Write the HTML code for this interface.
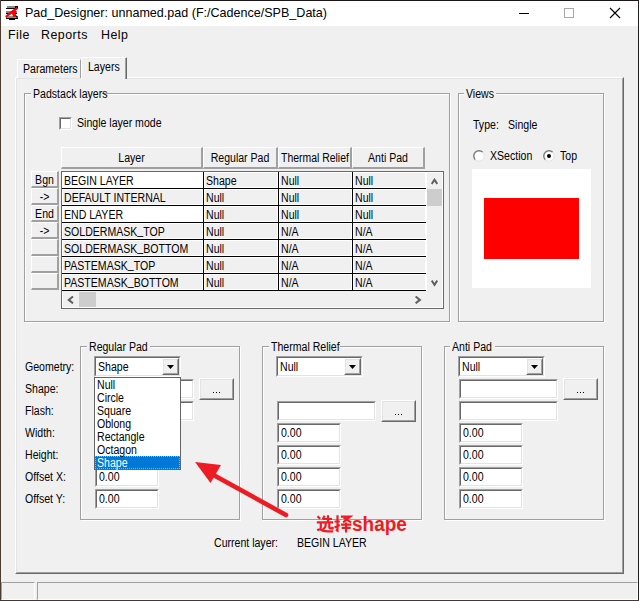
<!DOCTYPE html>
<html><head><meta charset="utf-8"><title>Pad_Designer</title>
<style>
*{margin:0;padding:0;box-sizing:border-box}
html,body{width:639px;height:601px;overflow:hidden;background:#f0f0f0}
body{position:relative;font-family:"Liberation Sans",sans-serif;font-size:12px;color:#000}
.a{position:absolute}
.t{position:absolute;white-space:nowrap;line-height:13px;transform-origin:0 0}
.gb{position:absolute;border:1px solid #a0a0a0;box-shadow:inset 1px 1px 0 #fff, 1px 1px 0 #fff}
.ed{position:absolute;background:#fff;border-top:1px solid #a0a0a0;border-left:1px solid #a0a0a0;border-right:1px solid #fff;border-bottom:1px solid #fff}
.ed::before{content:"";position:absolute;left:0;top:0;right:0;bottom:0;border-top:1px solid #696969;border-left:1px solid #696969;border-right:1px solid #e3e3e3;border-bottom:1px solid #e3e3e3}
.bt{position:absolute;background:#f0f0f0;border-top:1px solid #fff;border-left:1px solid #fff;border-right:1px solid #696969;border-bottom:1px solid #696969}
.bt::before{content:"";position:absolute;left:0;top:0;right:0;bottom:0;border-top:1px solid #e3e3e3;border-left:1px solid #e3e3e3;border-right:1px solid #a0a0a0;border-bottom:1px solid #a0a0a0}
.hb,.rb{position:absolute;background:#f0f0f0;border-top:1px solid #fff;border-left:1px solid #fff;border-right:2px solid #a0a0a0;border-bottom:2px solid #a0a0a0}
</style></head><body>
<div class="a" style="left:0px;top:0px;width:639px;height:1px;background:#1c1616"></div>
<div class="a" style="left:0px;top:0px;width:1px;height:601px;background:#4a3c32"></div>
<div class="a" style="left:638px;top:0px;width:1px;height:601px;background:#1e2220"></div>
<div class="a" style="left:0px;top:600px;width:639px;height:1px;background:#4a3630"></div>
<div class="a" style="left:1px;top:1px;width:637px;height:25px;background:#fff"></div>
<svg class="a" style="left:5px;top:6px" width="14" height="14" viewBox="0 0 14 14" shape-rendering="crispEdges">
<rect x="2" y="0" width="9" height="2" fill="#8a8a8a"/><rect x="1" y="2" width="12" height="1" fill="#000"/><rect x="10" y="0" width="3" height="2" fill="#000"/>
<rect x="1" y="5" width="11" height="2" fill="#8a8a8a"/><rect x="1" y="7" width="3" height="1" fill="#000"/><rect x="9" y="7" width="3" height="1" fill="#000"/>
<rect x="1" y="10" width="12" height="2" fill="#8a8a8a"/><rect x="1" y="12" width="12" height="1" fill="#000"/><rect x="4" y="13" width="6" height="1" fill="#000"/>
<path d="M9.5 4L3 8.5M9 8L12.5 11.5" stroke="#000" stroke-width="1.2" shape-rendering="auto"/>
<path d="M0.8 11L4 8.2L7 6L12.5 1.8" stroke="#f00" stroke-width="2.3" fill="none" shape-rendering="auto"/>
<path d="M5.5 6.2L11 4.5L10.8 10.8L8.2 11L7.2 8Z" fill="#f00" shape-rendering="auto"/>
</svg>
<div class="t" style="left:25px;top:5px;font-size:12.55px;line-height:16px">Pad_Designer: unnamed.pad (F:/Cadence/SPB_Data)</div>
<div class="a" style="left:519px;top:13px;width:10px;height:1px;background:#000"></div>
<div class="a" style="left:564px;top:8px;width:10px;height:10px;border:1px solid #a8a8a8"></div>
<svg class="a" style="left:609px;top:7px" width="12" height="12" viewBox="0 0 12 12"><path d="M1 1L11 11M11 1L1 11" stroke="#000" stroke-width="1.1"/></svg>
<div class="t" style="left:8px;top:27px;font-size:12.4px;letter-spacing:.5px;line-height:16px">File</div>
<div class="t" style="left:41px;top:27px;font-size:12.4px;letter-spacing:.5px;line-height:16px">Reports</div>
<div class="t" style="left:101px;top:27px;font-size:12.4px;letter-spacing:.5px;line-height:16px">Help</div>
<div class="a" style="left:15px;top:77px;width:609px;height:497px;border-top:1px solid #fff;border-left:1px solid #fff;border-right:1px solid #696969;border-bottom:1px solid #696969"><div class="a" style="left:0;top:0;right:0;bottom:0;border-top:1px solid #e3e3e3;border-left:1px solid #e3e3e3;border-right:1px solid #a0a0a0;border-bottom:1px solid #a0a0a0"></div></div>
<div class="a" style="left:17px;top:59px;width:64px;height:19px;border-top:1px solid #fff;border-left:1px solid #fff;border-right:1px solid #a0a0a0;background:#f0f0f0"></div>
<div class="t" style="left:23px;top:63px;transform:scaleX(0.88);">Parameters</div>
<div class="a" style="left:81px;top:57px;width:46px;height:22px;border-top:1px solid #fff;border-left:1px solid #fff;border-right:1px solid #696969;background:#f0f0f0"><div class="a" style="left:0;top:0;right:0;bottom:0;border-right:1px solid #a0a0a0"></div></div>
<div class="t" style="left:88px;top:61px;transform:scaleX(0.88);">Layers</div>
<div class="gb" style="left:24px;top:93px;width:426px;height:229px"></div>
<div class="a" style="left:31px;top:91px;width:71px;height:5px;background:#f0f0f0"></div>
<div class="t" style="left:33px;top:88px;transform:scaleX(0.88);">Padstack layers</div>
<div class="ed" style="left:59px;top:117px;width:13px;height:13px;background:#fff"></div>
<div class="t" style="left:77px;top:117px;transform:scaleX(0.88);">Single layer mode</div>
<div class="hb" style="left:61px;top:147px;width:142px;height:22px"></div>
<div class="t" style="left:61px;top:152px;width:141px;text-align:center;transform:scaleX(0.88);transform-origin:50% 0;">Layer</div>
<div class="hb" style="left:203px;top:147px;width:75px;height:22px"></div>
<div class="t" style="left:203px;top:152px;width:74px;text-align:center;transform:scaleX(0.88);transform-origin:50% 0;">Regular Pad</div>
<div class="hb" style="left:278px;top:147px;width:74px;height:22px"></div>
<div class="t" style="left:281px;top:152px;transform:scaleX(0.87)">Thermal Relief</div>
<div class="hb" style="left:352px;top:147px;width:73px;height:22px"></div>
<div class="t" style="left:352px;top:152px;width:72px;text-align:center;transform:scaleX(0.88);transform-origin:50% 0;">Anti Pad</div>
<div class="a" style="left:61px;top:171px;width:383px;height:138px;background:#f0f0f0;border:1px solid #696969;"></div>
<div class="a" style="left:62px;top:172px;width:381px;height:136px;border:1px solid #fff"></div>
<div class="rb" style="left:31px;top:171px;width:28px;height:17px"></div>
<div class="t" style="left:31px;top:174px;width:27px;text-align:center;transform:scaleX(0.88);transform-origin:50% 0;">Bgn</div>
<div class="a" style="left:62px;top:172px;width:141px;height:16px;background:#fff"></div>
<div class="t" style="left:64px;top:175px;transform:scaleX(0.88);">BEGIN LAYER</div>
<div class="a" style="left:204px;top:172px;width:74px;height:16px;background:#f0f0f0;border:1px solid #fff"></div>
<div class="t" style="left:206px;top:175px;transform:scaleX(0.88);">Shape</div>
<div class="a" style="left:279px;top:172px;width:73px;height:16px;background:#f0f0f0;border:1px solid #fff"></div>
<div class="t" style="left:281px;top:175px;transform:scaleX(0.88);">Null</div>
<div class="a" style="left:353px;top:172px;width:73px;height:16px;background:#f0f0f0;border:1px solid #fff"></div>
<div class="t" style="left:355px;top:175px;transform:scaleX(0.88);">Null</div>
<div class="a" style="left:62px;top:188px;width:364px;height:1px;background:#000"></div>
<div class="rb" style="left:31px;top:188px;width:28px;height:17px"></div>
<div class="t" style="left:31px;top:191px;width:27px;text-align:center;transform:scaleX(0.88);transform-origin:50% 0;">-&gt;</div>
<div class="a" style="left:62px;top:189px;width:141px;height:16px;background:#f0f0f0;border:1px solid #fff"></div>
<div class="t" style="left:64px;top:192px;transform:scaleX(0.88);">DEFAULT INTERNAL</div>
<div class="a" style="left:204px;top:189px;width:74px;height:16px;background:#f0f0f0;border:1px solid #fff"></div>
<div class="t" style="left:206px;top:192px;transform:scaleX(0.88);">Null</div>
<div class="a" style="left:279px;top:189px;width:73px;height:16px;background:#f0f0f0;border:1px solid #fff"></div>
<div class="t" style="left:281px;top:192px;transform:scaleX(0.88);">Null</div>
<div class="a" style="left:353px;top:189px;width:73px;height:16px;background:#f0f0f0;border:1px solid #fff"></div>
<div class="t" style="left:355px;top:192px;transform:scaleX(0.88);">Null</div>
<div class="a" style="left:62px;top:205px;width:364px;height:1px;background:#000"></div>
<div class="rb" style="left:31px;top:205px;width:28px;height:17px"></div>
<div class="t" style="left:31px;top:208px;width:27px;text-align:center;transform:scaleX(0.88);transform-origin:50% 0;">End</div>
<div class="a" style="left:62px;top:206px;width:141px;height:16px;background:#fff"></div>
<div class="t" style="left:64px;top:209px;transform:scaleX(0.88);">END LAYER</div>
<div class="a" style="left:204px;top:206px;width:74px;height:16px;background:#f0f0f0;border:1px solid #fff"></div>
<div class="t" style="left:206px;top:209px;transform:scaleX(0.88);">Null</div>
<div class="a" style="left:279px;top:206px;width:73px;height:16px;background:#f0f0f0;border:1px solid #fff"></div>
<div class="t" style="left:281px;top:209px;transform:scaleX(0.88);">Null</div>
<div class="a" style="left:353px;top:206px;width:73px;height:16px;background:#f0f0f0;border:1px solid #fff"></div>
<div class="t" style="left:355px;top:209px;transform:scaleX(0.88);">Null</div>
<div class="a" style="left:62px;top:222px;width:364px;height:1px;background:#000"></div>
<div class="rb" style="left:31px;top:222px;width:28px;height:17px"></div>
<div class="t" style="left:31px;top:225px;width:27px;text-align:center;transform:scaleX(0.88);transform-origin:50% 0;">-&gt;</div>
<div class="a" style="left:62px;top:223px;width:141px;height:16px;background:#f0f0f0;border:1px solid #fff"></div>
<div class="t" style="left:64px;top:226px;transform:scaleX(0.88);">SOLDERMASK<span style="position:relative;top:-2px">_</span>TOP</div>
<div class="a" style="left:204px;top:223px;width:74px;height:16px;background:#f0f0f0;border:1px solid #fff"></div>
<div class="t" style="left:206px;top:226px;transform:scaleX(0.88);">Null</div>
<div class="a" style="left:279px;top:223px;width:73px;height:16px;background:#f0f0f0;border:1px solid #fff"></div>
<div class="t" style="left:281px;top:226px;transform:scaleX(0.88);">N/A</div>
<div class="a" style="left:353px;top:223px;width:73px;height:16px;background:#f0f0f0;border:1px solid #fff"></div>
<div class="t" style="left:355px;top:226px;transform:scaleX(0.88);">N/A</div>
<div class="a" style="left:62px;top:239px;width:364px;height:1px;background:#000"></div>
<div class="rb" style="left:31px;top:239px;width:28px;height:17px"></div>
<div class="a" style="left:62px;top:240px;width:141px;height:16px;background:#f0f0f0;border:1px solid #fff"></div>
<div class="t" style="left:64px;top:243px;transform:scaleX(0.88);">SOLDERMASK<span style="position:relative;top:-2px">_</span>BOTTOM</div>
<div class="a" style="left:204px;top:240px;width:74px;height:16px;background:#f0f0f0;border:1px solid #fff"></div>
<div class="t" style="left:206px;top:243px;transform:scaleX(0.88);">Null</div>
<div class="a" style="left:279px;top:240px;width:73px;height:16px;background:#f0f0f0;border:1px solid #fff"></div>
<div class="t" style="left:281px;top:243px;transform:scaleX(0.88);">N/A</div>
<div class="a" style="left:353px;top:240px;width:73px;height:16px;background:#f0f0f0;border:1px solid #fff"></div>
<div class="t" style="left:355px;top:243px;transform:scaleX(0.88);">N/A</div>
<div class="a" style="left:62px;top:256px;width:364px;height:1px;background:#000"></div>
<div class="rb" style="left:31px;top:256px;width:28px;height:17px"></div>
<div class="a" style="left:62px;top:257px;width:141px;height:16px;background:#f0f0f0;border:1px solid #fff"></div>
<div class="t" style="left:64px;top:260px;transform:scaleX(0.88);">PASTEMASK<span style="position:relative;top:-2px">_</span>TOP</div>
<div class="a" style="left:204px;top:257px;width:74px;height:16px;background:#f0f0f0;border:1px solid #fff"></div>
<div class="t" style="left:206px;top:260px;transform:scaleX(0.88);">Null</div>
<div class="a" style="left:279px;top:257px;width:73px;height:16px;background:#f0f0f0;border:1px solid #fff"></div>
<div class="t" style="left:281px;top:260px;transform:scaleX(0.88);">N/A</div>
<div class="a" style="left:353px;top:257px;width:73px;height:16px;background:#f0f0f0;border:1px solid #fff"></div>
<div class="t" style="left:355px;top:260px;transform:scaleX(0.88);">N/A</div>
<div class="a" style="left:62px;top:273px;width:364px;height:1px;background:#000"></div>
<div class="rb" style="left:31px;top:273px;width:28px;height:17px"></div>
<div class="a" style="left:62px;top:274px;width:141px;height:16px;background:#f0f0f0;border:1px solid #fff"></div>
<div class="t" style="left:64px;top:277px;transform:scaleX(0.88);">PASTEMASK<span style="position:relative;top:-2px">_</span>BOTTOM</div>
<div class="a" style="left:204px;top:274px;width:74px;height:16px;background:#f0f0f0;border:1px solid #fff"></div>
<div class="t" style="left:206px;top:277px;transform:scaleX(0.88);">Null</div>
<div class="a" style="left:279px;top:274px;width:73px;height:16px;background:#f0f0f0;border:1px solid #fff"></div>
<div class="t" style="left:281px;top:277px;transform:scaleX(0.88);">N/A</div>
<div class="a" style="left:353px;top:274px;width:73px;height:16px;background:#f0f0f0;border:1px solid #fff"></div>
<div class="t" style="left:355px;top:277px;transform:scaleX(0.88);">N/A</div>
<div class="a" style="left:62px;top:290px;width:364px;height:1px;background:#000"></div>
<div class="a" style="left:203px;top:172px;width:1px;height:119px;background:#000"></div>
<div class="a" style="left:278px;top:172px;width:1px;height:119px;background:#000"></div>
<div class="a" style="left:352px;top:172px;width:1px;height:119px;background:#000"></div>
<div class="a" style="left:426px;top:172px;width:1px;height:119px;background:#fff"></div>
<div class="a" style="left:427px;top:189px;width:15px;height:17px;background:#cdcdcd"></div>
<svg class="a" style="left:431px;top:178px" width="7" height="7" viewBox="0 0 7 7"><path d="M0.7 6L3.5 1.7L6.3 6" fill="none" stroke="#606060" stroke-width="2"/></svg>
<svg class="a" style="left:431px;top:280px" width="7" height="7" viewBox="0 0 7 7"><path d="M0.7 0.6L3.5 4.9L6.3 0.6" fill="none" stroke="#606060" stroke-width="2"/></svg>
<div class="a" style="left:79px;top:292px;width:17px;height:15px;background:#cdcdcd"></div>
<svg class="a" style="left:67px;top:296px" width="7" height="8" viewBox="0 0 7 8"><path d="M6 0.5L1.7 3.9L6 7.3" fill="none" stroke="#606060" stroke-width="2"/></svg>
<svg class="a" style="left:415px;top:296px" width="7" height="8" viewBox="0 0 7 8"><path d="M0.6 0.5L4.9 3.9L0.6 7.3" fill="none" stroke="#606060" stroke-width="2"/></svg>
<div class="gb" style="left:458px;top:93px;width:146px;height:229px"></div>
<div class="a" style="left:464px;top:91px;width:32px;height:5px;background:#f0f0f0"></div>
<div class="t" style="left:466px;top:88px;transform:scaleX(0.88);">Views</div>
<div class="t" style="left:473px;top:119px;transform:scaleX(0.88);">Type:</div>
<div class="t" style="left:508px;top:119px;transform:scaleX(0.88);">Single</div>
<svg class="a" style="left:473px;top:150px" width="12" height="12" viewBox="0 0 12 12"><circle cx="6" cy="6" r="5" fill="#fff"/><path d="M2.3 9.7A5 5 0 0 1 9.7 2.3" fill="none" stroke="#7a7a7a" stroke-width="1.4"/><path d="M9.7 2.3A5 5 0 0 1 2.3 9.7" fill="none" stroke="#e3e3e3" stroke-width="1"/></svg>
<div class="t" style="left:490px;top:150px;transform:scaleX(0.88);">XSection</div>
<svg class="a" style="left:543px;top:150px" width="12" height="12" viewBox="0 0 12 12"><circle cx="6" cy="6" r="5" fill="#fff"/><path d="M2.3 9.7A5 5 0 0 1 9.7 2.3" fill="none" stroke="#7a7a7a" stroke-width="1.4"/><path d="M9.7 2.3A5 5 0 0 1 2.3 9.7" fill="none" stroke="#e3e3e3" stroke-width="1"/><circle cx="6" cy="6" r="2" fill="#000"/></svg>
<div class="t" style="left:560px;top:150px;transform:scaleX(0.88);">Top</div>
<div class="a" style="left:472px;top:169px;width:119px;height:119px;background:#fff"></div>
<div class="a" style="left:484px;top:198px;width:95px;height:61px;background:#f00"></div>
<div class="t" style="left:25px;top:361px;transform:scaleX(0.88);">Geometry:</div>
<div class="t" style="left:25px;top:383px;transform:scaleX(0.88);">Shape:</div>
<div class="t" style="left:25px;top:405px;transform:scaleX(0.88);">Flash:</div>
<div class="t" style="left:25px;top:427px;transform:scaleX(0.88);">Width:</div>
<div class="t" style="left:25px;top:449px;transform:scaleX(0.88);">Height:</div>
<div class="t" style="left:25px;top:471px;transform:scaleX(0.88);">Offset X:</div>
<div class="t" style="left:25px;top:493px;transform:scaleX(0.88);">Offset Y:</div>
<div class="gb" style="left:80px;top:346px;width:160px;height:174px"></div>
<div class="a" style="left:87px;top:344px;width:63px;height:5px;background:#f0f0f0"></div>
<div class="t" style="left:89px;top:341px;transform:scaleX(0.88);">Regular Pad</div>
<div class="gb" style="left:262px;top:346px;width:160px;height:174px"></div>
<div class="a" style="left:269px;top:344px;width:71px;height:5px;background:#f0f0f0"></div>
<div class="t" style="left:271px;top:341px;transform:scaleX(0.88);">Thermal Relief</div>
<div class="gb" style="left:444px;top:346px;width:160px;height:174px"></div>
<div class="a" style="left:450px;top:344px;width:45px;height:5px;background:#f0f0f0"></div>
<div class="t" style="left:452px;top:341px;transform:scaleX(0.88);">Anti Pad</div>
<div class="ed" style="left:276px;top:356px;width:87px;height:21px;background:#fff"></div>
<div class="t" style="left:280px;top:361px;transform:scaleX(0.88);">Null</div>
<div class="bt" style="left:344px;top:358px;width:17px;height:17px"></div>
<svg class="a" style="left:349px;top:365px" width="7" height="4" viewBox="0 0 7 4"><path d="M0 0H7L3.5 4Z" fill="#000"/></svg>
<div class="ed" style="left:277px;top:401px;width:99px;height:20px;background:#fff"></div>
<div class="bt" style="left:381px;top:400px;width:35px;height:22px"></div>
<div class="a" style="left:395px;top:414px;width:1px;height:1px;background:#000"></div>
<div class="a" style="left:398px;top:414px;width:1px;height:1px;background:#000"></div>
<div class="a" style="left:401px;top:414px;width:1px;height:1px;background:#000"></div>
<div class="ed" style="left:277px;top:423px;width:64px;height:20px;background:#fff"></div>
<div class="t" style="left:281px;top:427px;transform:scaleX(0.88);">0.00</div>
<div class="ed" style="left:277px;top:445px;width:64px;height:20px;background:#fff"></div>
<div class="t" style="left:281px;top:449px;transform:scaleX(0.88);">0.00</div>
<div class="ed" style="left:277px;top:467px;width:64px;height:20px;background:#fff"></div>
<div class="t" style="left:281px;top:471px;transform:scaleX(0.88);">0.00</div>
<div class="ed" style="left:277px;top:489px;width:64px;height:20px;background:#fff"></div>
<div class="t" style="left:281px;top:493px;transform:scaleX(0.88);">0.00</div>
<div class="ed" style="left:458px;top:356px;width:87px;height:21px;background:#fff"></div>
<div class="t" style="left:462px;top:361px;transform:scaleX(0.88);">Null</div>
<div class="bt" style="left:526px;top:358px;width:17px;height:17px"></div>
<svg class="a" style="left:531px;top:365px" width="7" height="4" viewBox="0 0 7 4"><path d="M0 0H7L3.5 4Z" fill="#000"/></svg>
<div class="ed" style="left:459px;top:379px;width:99px;height:20px;background:#fff"></div>
<div class="bt" style="left:563px;top:378px;width:35px;height:22px"></div>
<div class="a" style="left:577px;top:392px;width:1px;height:1px;background:#000"></div>
<div class="a" style="left:580px;top:392px;width:1px;height:1px;background:#000"></div>
<div class="a" style="left:583px;top:392px;width:1px;height:1px;background:#000"></div>
<div class="ed" style="left:459px;top:401px;width:99px;height:20px;background:#fff"></div>
<div class="ed" style="left:459px;top:423px;width:64px;height:20px;background:#fff"></div>
<div class="t" style="left:463px;top:427px;transform:scaleX(0.88);">0.00</div>
<div class="ed" style="left:459px;top:445px;width:64px;height:20px;background:#fff"></div>
<div class="t" style="left:463px;top:449px;transform:scaleX(0.88);">0.00</div>
<div class="ed" style="left:459px;top:467px;width:64px;height:20px;background:#fff"></div>
<div class="t" style="left:463px;top:471px;transform:scaleX(0.88);">0.00</div>
<div class="ed" style="left:459px;top:489px;width:64px;height:20px;background:#fff"></div>
<div class="t" style="left:463px;top:493px;transform:scaleX(0.88);">0.00</div>
<div class="ed" style="left:95px;top:379px;width:99px;height:20px;background:#fff"></div>
<div class="bt" style="left:199px;top:378px;width:35px;height:22px"></div>
<div class="a" style="left:213px;top:392px;width:1px;height:1px;background:#000"></div>
<div class="a" style="left:216px;top:392px;width:1px;height:1px;background:#000"></div>
<div class="a" style="left:219px;top:392px;width:1px;height:1px;background:#000"></div>
<div class="ed" style="left:95px;top:401px;width:99px;height:20px;background:#fff"></div>
<div class="ed" style="left:95px;top:423px;width:64px;height:20px;background:#fff"></div>
<div class="t" style="left:99px;top:427px;transform:scaleX(0.88);">0.00</div>
<div class="ed" style="left:95px;top:445px;width:64px;height:20px;background:#fff"></div>
<div class="t" style="left:99px;top:449px;transform:scaleX(0.88);">0.00</div>
<div class="ed" style="left:95px;top:467px;width:64px;height:20px;background:#fff"></div>
<div class="t" style="left:99px;top:471px;transform:scaleX(0.88);">0.00</div>
<div class="ed" style="left:95px;top:489px;width:64px;height:20px;background:#fff"></div>
<div class="t" style="left:99px;top:493px;transform:scaleX(0.88);">0.00</div>
<div class="ed" style="left:94px;top:356px;width:87px;height:21px;background:#fff"></div>
<div class="t" style="left:98px;top:361px;transform:scaleX(0.88);">Shape</div>
<div class="bt" style="left:162px;top:358px;width:17px;height:17px"></div>
<svg class="a" style="left:167px;top:365px" width="7" height="4" viewBox="0 0 7 4"><path d="M0 0H7L3.5 4Z" fill="#000"/></svg>
<div class="a" style="left:94px;top:377px;width:87px;height:93px;background:#fff;border:1px solid #646464"></div>
<div class="a" style="left:95px;top:456px;width:85px;height:13px;background:#0078d7;outline:1px dotted #f0a030;outline-offset:-1px"></div>
<div class="t" style="left:97px;top:379px;transform:scaleX(0.88);">Null</div>
<div class="t" style="left:97px;top:392px;transform:scaleX(0.88);">Circle</div>
<div class="t" style="left:97px;top:405px;transform:scaleX(0.88);">Square</div>
<div class="t" style="left:97px;top:418px;transform:scaleX(0.88);">Oblong</div>
<div class="t" style="left:97px;top:431px;transform:scaleX(0.88);">Rectangle</div>
<div class="t" style="left:97px;top:444px;transform:scaleX(0.88);">Octagon</div>
<div class="t" style="left:97px;top:457px;transform:scaleX(0.88);color:#fff">Shape</div>
<div class="t" style="left:214px;top:537px;transform:scaleX(0.88);">Current layer:</div>
<div class="t" style="left:297px;top:537px;transform:scaleX(0.88);">BEGIN LAYER</div>
<svg class="a" style="left:0;top:0" width="639" height="601" viewBox="0 0 639 601"><path d="M208 472L286 515" stroke="#ed1c24" stroke-width="4.6" stroke-linecap="round"/><path d="M195 462L221 465L210.5 483Z" fill="#ed1c24"/></svg>
<svg class="a" style="left:316px;top:514px" width="38" height="20" viewBox="0 0 38 20" fill="none" stroke="#ed1c24" stroke-width="2.2" stroke-linecap="butt" stroke-linejoin="miter">
<path d="M1.5 2.2L4.2 4.8M0.8 8.3H4.8V14.5M1.2 16.3Q4 14.5 5.5 16Q8 17.6 17.2 17.4"/>
<path d="M8.6 1.8L6.6 5.6M7.2 5H16M12 1.3V8.3M5.6 8.3H17.2M9.6 9V11.5Q9.4 14 6.6 15.3M13.3 9V13.6Q13.3 14.3 14 14.3H16.6V12.8"/>
<path transform="translate(17.5 0)" d="M1 7.5H6.3M4 1.3V16.6L2.4 15.8M1.1 13.6L6.3 11M7.4 2.6H16.8L9.6 8.4M10.2 3.6L17.6 8.4M7.6 10.6H17.8M8.2 13.8H17.2M12.6 8.6V18.6"/>
</svg>
<div class="t" style="left:352px;top:512px;font-size:19px;font-weight:bold;color:#ed1c24;line-height:21px;transform:scaleY(1.1)">shape</div>
<div class="a" style="left:1px;top:582px;width:34px;height:18px;border-top:1px solid #a0a0a0;border-left:1px solid #a0a0a0;border-right:1px solid #fff;border-bottom:1px solid #fff"></div>
<div class="a" style="left:37px;top:582px;width:601px;height:18px;border-top:1px solid #a0a0a0;border-left:1px solid #a0a0a0;border-right:1px solid #fff;border-bottom:1px solid #fff"></div>
</body></html>
